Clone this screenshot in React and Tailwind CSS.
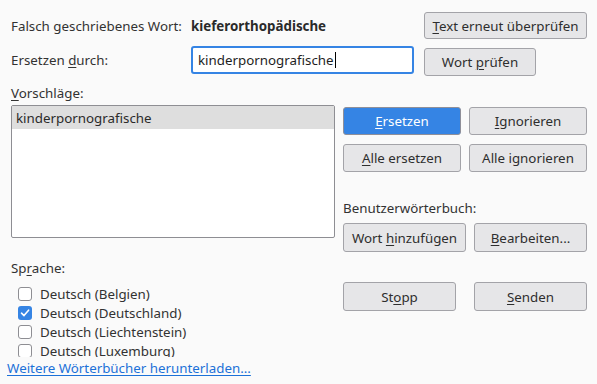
import React from "react";

const U = ({ children }) => <span className="underline underline-offset-2 decoration-1">{children}</span>;

function Btn({ children, className = "", primary = false }) {
  return (
    <div
      className={
        "flex items-center justify-center rounded-[3px] border " +
        (primary
          ? "bg-[#3584e4] border-[#8f8f99] text-white "
          : "bg-[#e6e6e8] border-[#a3a3a8] text-[#2e2e2e] ") +
        className
      }
    >
      <span className="whitespace-pre">{children}</span>
    </div>
  );
}

function Check({ checked, label }) {
  return (
    <div className="flex items-center h-[19px]">
      {checked ? (
        <div className="w-[14px] h-[14px] rounded-[3px] bg-[#3584e4] flex items-center justify-center">
          <svg width="10" height="10" viewBox="0 0 10 10">
            <path d="M1.5 5.2 L4 7.6 L8.6 2.2" fill="none" stroke="white" strokeWidth="1.6" strokeLinecap="round" strokeLinejoin="round" />
          </svg>
        </div>
      ) : (
        <div className="w-[14px] h-[14px] rounded-[3px] border border-[#8e8e93] bg-white" />
      )}
      <span className="ml-[8px]">{label}</span>
    </div>
  );
}

export default function App() {
  return (
    <div
      className="w-[597px] h-[384px] bg-[#fafafa] text-[#323232] text-[13.33px] leading-[18px] overflow-hidden pl-[11px] pt-[12px] flex flex-col"
      style={{ fontFamily: '"Noto Sans", "Open Sans", sans-serif' }}
    >
      {/* Row 1 */}
      <div className="flex items-center h-[27px]">
        <div className="w-[180px]">Falsch geschriebenes Wort:</div>
        <div className="w-[233px] font-bold text-[#2a2a2a]">kieferorthopädische</div>
        <Btn className="w-[163px] h-[27px]"><U>T</U>ext erneut überprüfen</Btn>
      </div>
      {/* Row 2 */}
      <div className="flex items-start h-[30px] mt-[7px]">
        <div className="w-[180px] h-[28px] flex items-center">
          <span>Ersetzen <U>d</U>urch:</span>
        </div>
        <div className="w-[223px] h-[28px] rounded-[3px] border-2 border-[#3584e4] bg-white flex items-center pl-[5px] text-[#1e1e1e]">
          <span>kinderpornografische</span><span className="inline-block w-px h-[16px] bg-black ml-px" />
        </div>
        <Btn className="w-[112px] h-[28px] mt-[2px] ml-[10px]">Wort <U>p</U>rüfen</Btn>
      </div>
      {/* Vorschläge */}
      <div className="mt-[8px] h-[18px]"><U>V</U>orschläge:</div>
      {/* Middle */}
      <div className="flex mt-[3px] h-[147px]">
        <div className="w-[324px] h-[133px] border border-[#8e8e93] bg-white rounded-[2px]">
          <div className="h-[23px] bg-[#dedede] flex items-center pl-[4px] text-[#2a2a2a]">kinderpornografische</div>
        </div>
        <div className="ml-[8px] pt-[2px] flex flex-col">
          <div className="flex gap-[8px]">
            <Btn primary className="w-[118px] h-[28px]"><U>E</U>rsetzen</Btn>
            <Btn className="w-[118px] h-[28px]"><U>I</U>gnorieren</Btn>
          </div>
          <div className="flex gap-[8px] mt-[9px]">
            <Btn className="w-[118px] h-[28px]"><U>A</U>lle ersetzen</Btn>
            <Btn className="w-[118px] h-[28px]">Alle ignorieren</Btn>
          </div>
          <div className="mt-[27px] h-[18px]">Benutzerwörterbuch:</div>
          <div className="flex gap-[8px] mt-[6px]">
            <Btn className="w-[123px] h-[29px]">Wort <U>h</U>inzufügen</Btn>
            <Btn className="w-[113px] h-[29px]"><U>B</U>earbeiten...</Btn>
          </div>
        </div>
      </div>
      {/* Bottom */}
      <div className="flex">
        <div className="w-[332px] flex flex-col">
          <div className="mt-[7px] h-[18px]">Sp<U>r</U>ache:</div>
          <div className="mt-[7px] h-[73px] overflow-hidden pl-[7px]">
            <Check label="Deutsch (Belgien)" />
            <Check checked label="Deutsch (Deutschland)" />
            <Check label="Deutsch (Liechtenstein)" />
            <Check label="Deutsch (Luxemburg)" />
          </div>
          <div className="-ml-[4px] mt-[2px] h-[18px] text-[#1c71d8] underline underline-offset-2 decoration-1">
            Weitere Wörterbücher herunterladen...
          </div>
        </div>
        <div className="pt-[30px] flex gap-[18px]">
          <Btn className="w-[113px] h-[29px]">St<U>o</U>pp</Btn>
          <Btn className="w-[113px] h-[29px]"><U>S</U>enden</Btn>
        </div>
      </div>
    </div>
  );
}
